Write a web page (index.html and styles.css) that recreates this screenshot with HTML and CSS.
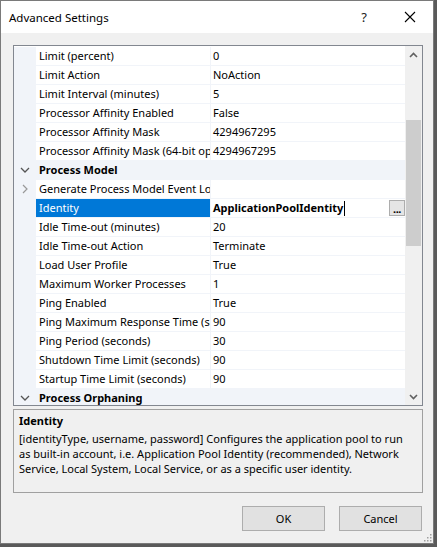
FILE: index.html
```html
<!DOCTYPE html>
<html>
<head>
<meta charset="utf-8">
<link rel="stylesheet" href="styles.css">
</head>
<body>
<div class="window">
  <div class="titlebar">
    <span class="title">Advanced Settings</span>
    <span class="help">?</span>
    <span class="close"><svg width="12" height="12" viewBox="0 0 12 12"><path d="M1 1L11 11M11 1L1 11" stroke="#000" stroke-width="1.1" fill="none"/></svg></span>
  </div>
  <div class="client">
    <div class="grid">
      <div class="rows">
        <div class="row"><div class="gut"></div><div class="name">Limit (percent)</div><div class="val">0</div></div>
        <div class="row"><div class="gut"></div><div class="name">Limit Action</div><div class="val">NoAction</div></div>
        <div class="row"><div class="gut"></div><div class="name">Limit Interval (minutes)</div><div class="val">5</div></div>
        <div class="row"><div class="gut"></div><div class="name">Processor Affinity Enabled</div><div class="val">False</div></div>
        <div class="row"><div class="gut"></div><div class="name">Processor Affinity Mask</div><div class="val">4294967295</div></div>
        <div class="row"><div class="gut"></div><div class="name">Processor Affinity Mask (64-bit option)</div><div class="val">4294967295</div></div>
        <div class="row cat"><div class="gut"><svg width="10" height="6" viewBox="0 0 10 6"><path d="M1 1L5 5L9 1" stroke="#555" stroke-width="1.3" fill="none"/></svg></div><div class="catname">Process Model</div></div>
        <div class="row"><div class="gut"><svg width="6" height="10" viewBox="0 0 6 10"><path d="M1 1L5 5L1 9" stroke="#999" stroke-width="1.2" fill="none"/></svg></div><div class="name">Generate Process Model Event Log Entry</div><div class="val"></div></div>
        <div class="row sel"><div class="gut"></div><div class="name">Identity</div><div class="val edit"><span class="bold">ApplicationPoolIdentity</span><span class="caret"></span><span class="dots">...</span></div></div>
        <div class="row"><div class="gut"></div><div class="name">Idle Time-out (minutes)</div><div class="val">20</div></div>
        <div class="row"><div class="gut"></div><div class="name">Idle Time-out Action</div><div class="val">Terminate</div></div>
        <div class="row"><div class="gut"></div><div class="name">Load User Profile</div><div class="val">True</div></div>
        <div class="row"><div class="gut"></div><div class="name">Maximum Worker Processes</div><div class="val">1</div></div>
        <div class="row"><div class="gut"></div><div class="name">Ping Enabled</div><div class="val">True</div></div>
        <div class="row"><div class="gut"></div><div class="name">Ping Maximum Response Time (seconds)</div><div class="val">90</div></div>
        <div class="row"><div class="gut"></div><div class="name">Ping Period (seconds)</div><div class="val">30</div></div>
        <div class="row"><div class="gut"></div><div class="name">Shutdown Time Limit (seconds)</div><div class="val">90</div></div>
        <div class="row"><div class="gut"></div><div class="name">Startup Time Limit (seconds)</div><div class="val">90</div></div>
        <div class="row cat"><div class="gut"><svg width="10" height="6" viewBox="0 0 10 6"><path d="M1 1L5 5L9 1" stroke="#555" stroke-width="1.3" fill="none"/></svg></div><div class="catname">Process Orphaning</div></div>
      </div>
      <div class="scrollbar">
        <div class="sb-btn"><svg width="9" height="6" viewBox="0 0 9 6"><path d="M1 5L4.5 1.5L8 5" stroke="#606060" stroke-width="1.6" fill="none"/></svg></div>
        <div class="sb-track"><div class="thumb"></div></div>
        <div class="sb-btn"><svg width="9" height="6" viewBox="0 0 9 6"><path d="M1 1L4.5 4.5L8 1" stroke="#606060" stroke-width="1.6" fill="none"/></svg></div>
      </div>
    </div>
    <div class="desc">
      <div class="desc-title">Identity</div>
      <div class="desc-text">[identityType, username, password] Configures the application pool to run as built-in account, i.e. Application Pool Identity (recommended), Network Service, Local System, Local Service, or as a specific user identity.</div>
    </div>
    <div class="buttons">
      <button class="btn">OK</button>
      <button class="btn">Cancel</button>
    </div>
    <div class="grip"><svg width="8" height="8" viewBox="0 0 8 8"><g fill="#a0a0a0"><rect x="6" y="0" width="1.5" height="1.5"/><rect x="3" y="3" width="1.5" height="1.5"/><rect x="6" y="3" width="1.5" height="1.5"/><rect x="0" y="6" width="1.5" height="1.5"/><rect x="3" y="6" width="1.5" height="1.5"/><rect x="6" y="6" width="1.5" height="1.5"/></g></svg></div>
  </div>
</div>
</body>
</html>
```

FILE: styles.css
```css
* { box-sizing: border-box; }
html, body { margin: 0; padding: 0; }
body {
  background: #5a5a5a;
  font-family: "Noto Sans", "Liberation Sans", sans-serif;
  font-size: 11px;
  color: #000;
  width: 437px;
  height: 547px;
  overflow: hidden;
}
.window {
  width: 434px;
  height: 544px;
  border: 1px solid #7a7a7a;
  background: #f0f0f0;
  display: flex;
  flex-direction: column;
}
.titlebar {
  height: 32px;
  background: #fff;
  display: flex;
  align-items: center;
  padding-left: 8px;
  flex: none;
}
.title { font-size: 11.5px; flex: 1; }
.help { width: 46px; text-align: center; font-size: 13px; color: #222; }
.close { width: 46px; display: flex; justify-content: center; }
.client {
  flex: 1;
  padding: 12px 10px 0 12px;
  display: flex;
  flex-direction: column;
  position: relative;
}
.grid {
  height: 361px;
  border: 1px solid #828790;
  background: #fff;
  display: flex;
  flex: none;
}
.rows {
  flex: 1;
  overflow: hidden;
  padding-top: 1px;
}
.row {
  height: 19px;
  display: flex;
  border-bottom: 1px solid #f1f4f9;
}
.gut {
  width: 22px;
  flex: none;
  background: #f1f4f9;
  display: flex;
  align-items: center;
  justify-content: center;
}
.name {
  width: 174px;
  flex: none;
  padding-left: 3px;
  white-space: nowrap;
  overflow: hidden;
  line-height: 18px;
}
.val {
  flex: 1;
  border-left: 1px solid #f1f4f9;
  padding-left: 2px;
  line-height: 18px;
  white-space: nowrap;
  overflow: hidden;
  display: flex;
  align-items: center;
}
.cat { background: #f1f4f9; }
.catname { font-weight: bold; padding-left: 3px; line-height: 18px; }
.sel .name { background: #0078d7; color: #fff; }
.bold { font-weight: bold; }
.caret { width: 1px; height: 15px; background: #000; margin-left: 1px; }
.dots {
  margin-left: auto;
  width: 16px;
  height: 16px;
  border: 1px solid #adadad;
  background: #e5e5e5;
  font-size: 11px;
  line-height: 16px;
  text-align: center;
  font-weight: bold;
  letter-spacing: -0.5px;
}
.scrollbar {
  width: 17px;
  flex: none;
  background: #f0f0f0;
  display: flex;
  flex-direction: column;
}
.sb-btn { height: 17px; display: flex; align-items: center; justify-content: center; flex: none; }
.sb-track { flex: 1; padding: 57px 1px 0 1px; }
.thumb { height: 126px; background: #cdcdcd; }
.desc {
  margin-top: 3px;
  height: 84px;
  border: 1px solid #a0a0a0;
  padding: 3px 5px;
  flex: none;
}
.desc-title { font-weight: bold; line-height: 15px; margin-bottom: 3px; }
.desc-text { line-height: 15px; }
.buttons {
  display: flex;
  justify-content: flex-end;
  gap: 14px;
  margin-top: 13px;
  padding-right: 1px;
}
.btn {
  width: 83px;
  height: 25px;
  background: #e1e1e1;
  border: 1px solid #adadad;
  font-family: inherit;
  font-size: 11px;
  color: #000;
  padding: 0;
}
.grip { position: absolute; right: 1px; bottom: 1px; display: flex; }
```
